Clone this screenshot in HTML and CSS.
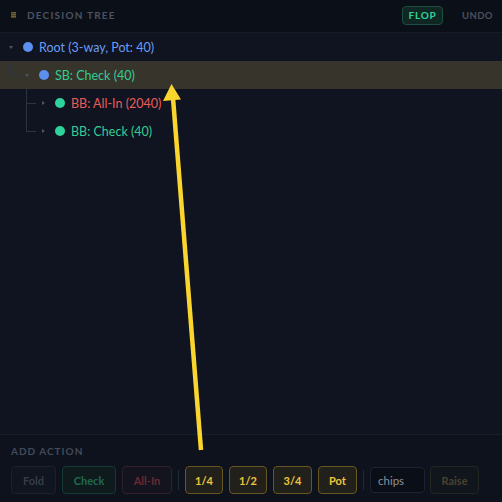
FILE: index.html
```html
<!DOCTYPE html>
<html>
<head>
<meta charset="utf-8">
<link rel="stylesheet" href="styles.css">
</head>
<body>
<div class="app">
  <header class="header">
    <div class="title">
      <span class="menu-icon"></span>
      <span class="title-text">DECISION TREE</span>
    </div>
    <div class="header-actions">
      <button class="street">FLOP</button>
      <button class="undo">UNDO</button>
    </div>
  </header>

  <main class="tree">
    <div class="row d0">
      <span class="caret down"></span>
      <span class="dot blue"></span>
      <span class="label blue-t">Root (3-way, Pot: 40)</span>
    </div>
    <div class="row d1 child last selected">
      <span class="caret down"></span>
      <span class="dot blue"></span>
      <span class="label green-t">SB: Check (40)</span>
    </div>
    <div class="row d2 child">
      <span class="caret right"></span>
      <span class="dot green"></span>
      <span class="label red-t">BB: All-In (2040)</span>
    </div>
    <div class="row d2 child last">
      <span class="caret right"></span>
      <span class="dot green"></span>
      <span class="label green-t">BB: Check (40)</span>
    </div>
  </main>

  <footer class="footer">
    <div class="section-label">ADD ACTION</div>
    <div class="actions">
      <button class="btn fold">Fold</button>
      <button class="btn check">Check</button>
      <button class="btn allin">All-In</button>
      <span class="sep"></span>
      <button class="btn size">1/4</button>
      <button class="btn size">1/2</button>
      <button class="btn size wide">3/4</button>
      <button class="btn size wide">Pot</button>
      <span class="sep"></span>
      <input class="chips" type="text" placeholder="chips">
      <button class="btn raise">Raise</button>
    </div>
  </footer>

  <svg class="arrow" width="502" height="502" viewBox="0 0 502 502">
    <line x1="201" y1="450" x2="173" y2="98" stroke="#f9d52e" stroke-width="4.5"/>
    <polygon points="171.5,84 163,101 181,99.5" fill="#f9d52e"/>
  </svg>
</div>
</body>
</html>
```

FILE: styles.css
```css
* { box-sizing: border-box; }
html, body { margin: 0; padding: 0; }
body {
  width: 502px;
  height: 502px;
  background: #0f1420;
  font-family: Lato, "Noto Sans", sans-serif;
  overflow: hidden;
}
.app {
  position: relative;
  width: 502px;
  height: 502px;
  display: flex;
  flex-direction: column;
}
.header {
  height: 33px;
  flex: none;
  background: #0b0f17;
  border-bottom: 1px solid #151b27;
  display: flex;
  align-items: center;
  justify-content: space-between;
  padding: 0 12px 2px 11px;
}
.title { display: flex; align-items: center; }
.menu-icon {
  width: 5px;
  height: 6px;
  margin-right: 11px;
  background: repeating-linear-gradient(to bottom, #6e5f33 0 1px, #4a4129 1px 2px);
}
.title-text {
  font-size: 10px;
  font-weight: 700;
  letter-spacing: 1.2px;
  color: #4a5366;
}
.header-actions { display: flex; align-items: center; gap: 19px; }
.street {
  font-family: inherit;
  height: 19px;
  width: 41px;
  padding: 0;
  border: 1px solid #1d4d40;
  border-radius: 4px;
  background: #0f2622;
  color: #2fd49b;
  font-size: 10px;
  font-weight: 700;
  letter-spacing: 0.8px;
}
.undo {
  font-family: inherit;
  background: none;
  border: none;
  padding: 0;
  width: 28px;
  color: #4a4f5d;
  font-size: 9.5px;
  font-weight: 700;
  letter-spacing: 0.4px;
  text-align: right;
}
.tree {
  flex: 1;
  background: #0f1420;
}
.row {
  position: relative;
  height: 28px;
  display: flex;
  align-items: center;
  font-size: 12.5px;
}
.row.d0 { padding-left: 8px; }
.row.d1 { padding-left: 24px; }
.row.d2 { padding-left: 40px; }
.row.selected { background: #37342b; }
.caret {
  width: 6px;
  height: 6px;
  display: flex;
  align-items: center;
  justify-content: center;
  margin-right: 9px;
}
.caret::before { content: ""; display: block; width: 0; height: 0; }
.caret.down::before {
  border-left: 2.5px solid transparent;
  border-right: 2.5px solid transparent;
  border-top: 3.5px solid #4d5564;
}
.caret.right::before {
  border-top: 2.5px solid transparent;
  border-bottom: 2.5px solid transparent;
  border-left: 3.5px solid #4d5564;
}
.dot {
  width: 10px;
  height: 10px;
  border-radius: 50%;
  margin-right: 6px;
}
.dot.blue { background: #5b8ff0; }
.dot.green { background: #2ed39c; }
.label { white-space: nowrap; }
.blue-t { color: #6c9cf5; }
.green-t { color: #34cc94; }
.red-t { color: #ea5b5b; }
.row.child::before {
  content: "";
  position: absolute;
  top: 0;
  height: 14px;
  border-left: 1px solid #2c3444;
  border-bottom: 1px solid #2c3444;
}
.row.d1.child::before { left: 10px; width: 8px; }
.row.d2.child::before { left: 26px; width: 9px; }
.row.child:not(.last)::after {
  content: "";
  position: absolute;
  top: 14px;
  bottom: 0;
  left: 26px;
  border-left: 1px solid #2c3444;
}
.footer {
  flex: none;
  height: 68px;
  background: #0d121c;
  border-top: 1px solid #181e2a;
  padding: 10px 11px 0 11px;
}
.section-label {
  font-size: 10px;
  font-weight: 700;
  letter-spacing: 1px;
  color: #434b5c;
  line-height: 12px;
  margin-bottom: 9px;
}
.actions {
  display: flex;
  align-items: center;
  gap: 6px;
}
.btn {
  font-family: inherit;
  height: 28px;
  padding: 0;
  border-radius: 4px;
  font-size: 11px;
  font-weight: 700;
  background: transparent;
}
.fold { width: 45px; border: 1px solid #1b212c; color: #363d4b; background: #10151f; }
.check { width: 54px; border: 1px solid #173a32; color: #1f6a52; background: #0e1a1c; }
.allin { width: 50px; border: 1px solid #32202a; color: #6a2932; background: #13141d; }
.size { width: 38px; border: 1px solid #66561f; color: #efc53e; background: #22201b; }
.size.wide { width: 39px; }
.sep { width: 1px; height: 20px; background: #222834; }
.chips {
  font-family: inherit;
  width: 55px;
  height: 26px;
  border: 1px solid #1c2230;
  border-radius: 4px;
  background: #0a0e16;
  color: #8c919c;
  font-size: 11.5px;
  padding: 0 7px;
  outline: none;
}
.chips::placeholder { color: #8c919c; }
.raise { width: 49px; border: 1px solid #232520; color: #4a432e; background: #11151c; margin-left: -1px; }
.arrow {
  position: absolute;
  left: 0;
  top: 0;
  pointer-events: none;
}
```
